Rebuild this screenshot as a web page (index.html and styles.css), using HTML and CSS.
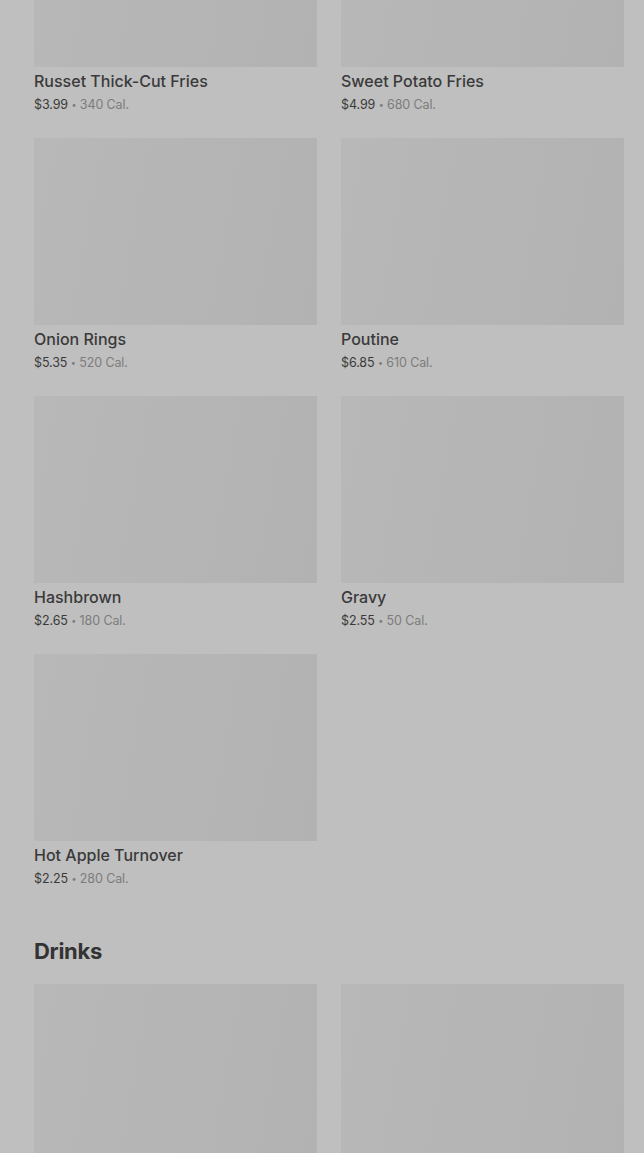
FILE: index.html
```html
<!DOCTYPE html>
<html lang="en">
<head>
    <meta charset="UTF-8">
    <meta name="viewport" content="width=device-width, initial-scale=1.0">
    <title>Menu</title>
    <link rel="stylesheet" href="styles.css">
</head>
<body>

<div class="menu">
    <!-- Sides -->
    <section class="section">
        <div class="grid">
            <div class="item">
                <div class="thumb"></div>
                <p class="name">Russet Thick-Cut Fries</p>
                <p class="meta"><span class="price">$3.99</span> <span class="dot">•</span> 340 Cal.</p>
            </div>
            <div class="item">
                <div class="thumb"></div>
                <p class="name">Sweet Potato Fries</p>
                <p class="meta"><span class="price">$4.99</span> <span class="dot">•</span> 680 Cal.</p>
            </div>
            <div class="item">
                <div class="thumb"></div>
                <p class="name">Onion Rings</p>
                <p class="meta"><span class="price">$5.35</span> <span class="dot">•</span> 520 Cal.</p>
            </div>
            <div class="item">
                <div class="thumb"></div>
                <p class="name">Poutine</p>
                <p class="meta"><span class="price">$6.85</span> <span class="dot">•</span> 610 Cal.</p>
            </div>
            <div class="item">
                <div class="thumb"></div>
                <p class="name">Hashbrown</p>
                <p class="meta"><span class="price">$2.65</span> <span class="dot">•</span> 180 Cal.</p>
            </div>
            <div class="item">
                <div class="thumb"></div>
                <p class="name">Gravy</p>
                <p class="meta"><span class="price">$2.55</span> <span class="dot">•</span> 50 Cal.</p>
            </div>
            <div class="item">
                <div class="thumb"></div>
                <p class="name">Hot Apple Turnover</p>
                <p class="meta"><span class="price">$2.25</span> <span class="dot">•</span> 280 Cal.</p>
            </div>
        </div>
    </section>

    <!-- Drinks -->
    <section class="section">
        <h2 class="section-title">Drinks</h2>
        <div class="grid">
            <div class="item">
                <div class="thumb"></div>
            </div>
            <div class="item">
                <div class="thumb"></div>
            </div>
        </div>
    </section>
</div>

</body>
</html>
```

FILE: styles.css
```css
/* Page (dimmed behind a modal) */
body {
    margin: 0;
    background: #bfbfbf;
    font-family: Inter, "Liberation Sans", sans-serif;
    overflow: hidden;
}

/* scrolled part way into the menu */
.menu {
    margin-top: -120px;
    padding: 0 20px 0 34px;
}

.section {
    margin-bottom: 49px;
}

.section-title {
    margin: 0 0 19px;
    font-size: 22px;
    line-height: 28px;
    font-weight: 700;
    color: #333;
    letter-spacing: -0.3px;
}

/* Two column item grid */
.grid {
    display: grid;
    grid-template-columns: 283px 283px;
    column-gap: 24px;
    row-gap: 24px;
}

.thumb {
    height: 187px;
    background: linear-gradient(100deg, #b8b8b8, #b2b2b2);
}

.name {
    margin: 4px 0 0;
    font-size: 16px;
    line-height: 20px;
    font-weight: 500;
    color: #3a3a3a;
}

.meta {
    margin: 5px 0 0;
    font-size: 12.5px;
    line-height: 18px;
    color: #7c7c7c;
    letter-spacing: -0.1px;
}

.price {
    color: #3a3a3a;
}

.dot {
    font-size: 9px;
    vertical-align: 1px;
}
```
